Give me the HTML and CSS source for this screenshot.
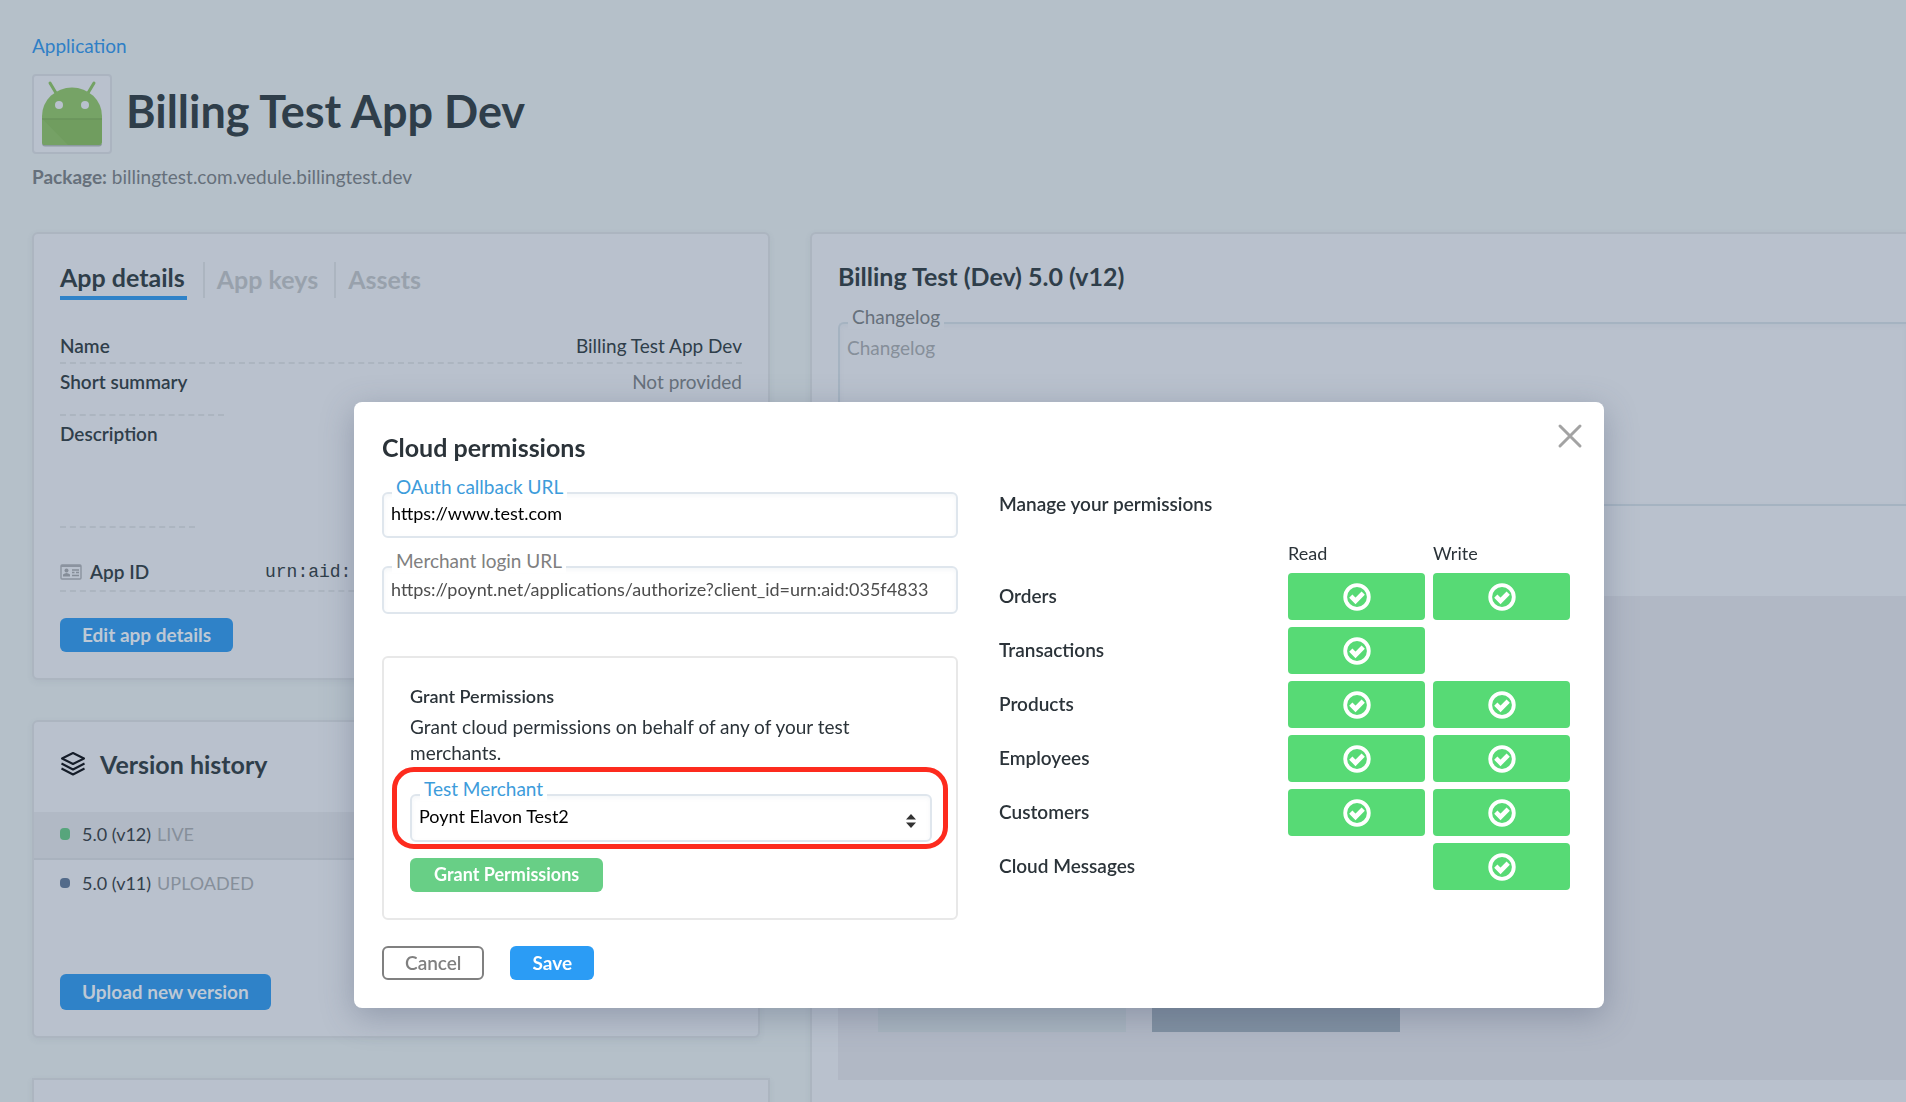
FILE: index.html
```html
<!DOCTYPE html>
<html lang="en">
<head>
<meta charset="utf-8">
<title>Billing Test App Dev</title>
<link rel="stylesheet" href="styles.css">
</head>
<body>
<svg class="sprite" aria-hidden="true">
  <symbol id="check" viewBox="0 0 28 28">
    <circle cx="14" cy="14" r="11.8" fill="none" stroke="#fff" stroke-width="3.8"/>
    <path d="M7.800 13.200 12.500 17.900 20.200 10.200" fill="none" stroke="#fff" stroke-width="4.6"/>
  </symbol>
</svg>

<div class="page">
  <header class="page-head">
    <a class="crumb" href="#">Application</a>
    <div class="title-row">
      <div class="app-icon">
        <svg width="64" height="70" viewBox="0 0 64 70" aria-hidden="true">
          <path d="M10 4 16 14M54 4 48 14" stroke="#73a263" stroke-width="3" stroke-linecap="round"/>
          <path d="M2 40V37a30 28.500 0 0 1 60 0v3z" fill="#76a366"/>
          <path d="M2 65a3 3 0 0 0 3 2.500H59a3 3 0 0 0 3-2.500z" fill="#8c9aa0"/>
          <path d="M2 39.500H62V63a3 3 0 0 1-3 3H5a3 3 0 0 1-3-3z" fill="#709d5f"/>
          <path d="M2 39.500 28 66H5a3 3 0 0 1-3-3z" fill="#75a165"/>
          <path d="M2 40H62" stroke="#668f5a" stroke-width="1"/>
          <circle cx="19" cy="26" r="4" fill="#b9c1cd"/>
          <circle cx="45" cy="26" r="4" fill="#b9c1cd"/>
        </svg>
      </div>
      <h1>Billing Test App Dev</h1>
    </div>
    <p class="package"><strong>Package:</strong> billingtest.com.vedule.billingtest.dev</p>
  </header>

  <main class="columns">
    <div class="left">
      <section class="card details">
        <nav class="tabs">
          <a class="tab active" href="#">App details</a>
          <a class="tab" href="#">App keys</a>
          <a class="tab" href="#">Assets</a>
        </nav>
        <dl class="facts">
          <div class="fact ruled"><dt>Name</dt><dd>Billing Test App Dev</dd></div>
          <div class="fact summary"><dt>Short summary</dt><dd class="empty">Not provided</dd></div>
          <div class="fact description"><dt>Description</dt></div>
          <div class="fact ruled app-id">
            <dt>
              <svg width="22" height="16" viewBox="0 0 22 16" aria-hidden="true">
                <rect x="1" y="1" width="20" height="14" rx="1" fill="none" stroke="#8b939f" stroke-width="1.400"/>
                <path d="M1 2H21" stroke="#8b939f" stroke-width="2"/>
                <circle cx="6.500" cy="6.500" r="2" fill="#858d98"/>
                <path d="M3 12.500V10.500Q6.500 7.500 10 10.500V12.500z" fill="#858d98"/>
                <path d="M12 6H19M12 8.500H14.500M16 8.500H19M12 11.500H19" stroke="#858d98" stroke-width="1.300"/>
              </svg>
              App ID
            </dt>
            <dd class="mono">urn:aid:</dd>
          </div>
        </dl>
        <button class="btn dim" type="button">Edit app details</button>
      </section>

      <section class="card history">
        <h2>
          <svg width="26" height="26" viewBox="0 0 26 26" fill="none" stroke="#151d29" stroke-width="2" stroke-linejoin="round" aria-hidden="true">
            <path d="M13 2 24 7.500 13 13 2 7.500z"/>
            <path d="M1.500 12.500 13 18.500 24.500 12.500M1.500 17.500 13 23.500 24.500 17.500"/>
          </svg>
          Version history
        </h2>
        <ul class="versions">
          <li class="live"><i class="dot"></i>5.0 (v12) <span>LIVE</span></li>
          <li><i class="dot"></i>5.0 (v11) <span>UPLOADED</span></li>
        </ul>
        <button class="btn dim tall" type="button">Upload new version</button>
      </section>

      <section class="card next"></section>
    </div>

    <section class="card release">
      <h2>Billing Test (Dev) 5.0 (v12)</h2>
      <div class="field on-page">
        <label for="changelog">Changelog</label>
        <textarea id="changelog" placeholder="Changelog"></textarea>
      </div>
      <div class="shots">
        <div class="shot"></div>
        <div class="shot dark"></div>
      </div>
    </section>
  </main>
</div>

<div class="overlay">
  <div class="modal" role="dialog" aria-labelledby="modal-title">
    <button class="close" type="button" aria-label="Close">
      <svg width="26" height="26" viewBox="0 0 26 26" stroke="#a3a3a3" stroke-width="3" stroke-linecap="round" aria-hidden="true"><path d="M3 3 23 23M23 3 3 23"/></svg>
    </button>
    <form class="urls">
      <h2 id="modal-title">Cloud permissions</h2>
      <div class="field focus">
        <label for="oauth">OAuth callback URL</label>
        <input id="oauth" type="text" value="https://www.test.com">
      </div>
      <div class="field">
        <label for="login">Merchant login URL</label>
        <input id="login" type="text" readonly value="https://poynt.net/applications/authorize?client_id=urn:aid:035f4833">
      </div>
      <div class="grant">
        <h3>Grant Permissions</h3>
        <p>Grant cloud permissions on behalf of any of your test merchants.</p>
        <div class="highlight">
          <div class="field focus">
            <label for="merchant">Test Merchant</label>
            <select id="merchant"><option>Poynt Elavon Test2</option></select>
            <svg class="arrows" width="10" height="14" viewBox="0 0 10 14" fill="#333" aria-hidden="true"><path d="M0 5.500 5 0 10 5.500zM0 8.500 5 14 10 8.500z"/></svg>
          </div>
        </div>
        <button class="btn green" type="button">Grant Permissions</button>
      </div>
      <div class="actions">
        <button class="btn outline" type="button">Cancel</button>
        <button class="btn primary" type="button">Save</button>
      </div>
    </form>

    <section class="permissions">
      <h3>Manage your permissions</h3>
      <table>
        <thead><tr><td></td><th scope="col">Read</th><th scope="col">Write</th></tr></thead>
        <tbody>
          <tr><th scope="row">Orders</th>
            <td><label class="perm"><input type="checkbox" checked aria-label="Read orders"><svg><use href="#check"/></svg></label></td>
            <td><label class="perm"><input type="checkbox" checked aria-label="Write orders"><svg><use href="#check"/></svg></label></td></tr>
          <tr><th scope="row">Transactions</th>
            <td><label class="perm"><input type="checkbox" checked aria-label="Read transactions"><svg><use href="#check"/></svg></label></td>
            <td></td></tr>
          <tr><th scope="row">Products</th>
            <td><label class="perm"><input type="checkbox" checked aria-label="Read products"><svg><use href="#check"/></svg></label></td>
            <td><label class="perm"><input type="checkbox" checked aria-label="Write products"><svg><use href="#check"/></svg></label></td></tr>
          <tr><th scope="row">Employees</th>
            <td><label class="perm"><input type="checkbox" checked aria-label="Read employees"><svg><use href="#check"/></svg></label></td>
            <td><label class="perm"><input type="checkbox" checked aria-label="Write employees"><svg><use href="#check"/></svg></label></td></tr>
          <tr><th scope="row">Customers</th>
            <td><label class="perm"><input type="checkbox" checked aria-label="Read customers"><svg><use href="#check"/></svg></label></td>
            <td><label class="perm"><input type="checkbox" checked aria-label="Write customers"><svg><use href="#check"/></svg></label></td></tr>
          <tr><th scope="row">Cloud Messages</th>
            <td></td>
            <td><label class="perm"><input type="checkbox" checked aria-label="Write cloud messages"><svg><use href="#check"/></svg></label></td></tr>
        </tbody>
      </table>
    </section>
  </div>
</div>
</body>
</html>
```

FILE: styles.css
```css
* { box-sizing: border-box; }
html { height: 100%; }
body {
  margin: 0;
  height: 100%;
  overflow: hidden;
  background: #b5c0c9;
  color: #2f3e4a;
  font: 19px/24px Lato, "Liberation Sans", sans-serif;
}
h1, h2, h3, p, dl, dd, ul { margin: 0; padding: 0; }
h2 { font-size: 25px; line-height: 32px; font-weight: 700; }
h3 { font-size: 19px; line-height: 24px; font-weight: 600; }
button, input, select, textarea { font: inherit; color: inherit; }
a { text-decoration: none; }
.sprite { display: none; }

/* Page behind the dialog */
.page-head { padding: 34px 32px 0; }
.crumb { display: block; color: #2f7fc6; }
.title-row { display: flex; align-items: center; gap: 14px; margin-top: 16px; }
.app-icon {
  display: flex;
  justify-content: center;
  width: 80px;
  height: 80px;
  padding-top: 3px;
  border: 2px solid #abb4c0;
  border-radius: 4px;
  background: #b9c1cd;
}
h1 { font-size: 45px; line-height: 56px; padding-bottom: 6px; font-weight: 700; }
.package { margin-top: 11px; color: #66707b; }

.columns {
  display: grid;
  grid-template-columns: 738px 1fr;
  gap: 40px;
  padding: 43px 0 0 32px;
}
.left { display: flex; flex-direction: column; gap: 40px; }
.card {
  border: 2px solid #acb5c0;
  border-radius: 6px;
  background: #b9c1cd;
  box-shadow: 0 2px 6px rgba(80, 95, 115, .08);
}
.details { height: 448px; padding: 26px 26px 0; }
.tabs { display: flex; align-items: center; height: 40px; }
.tab {
  display: flex;
  align-items: center;
  height: 36px;
  padding: 0 16px 2px 12px;
  border-left: 2px solid #acb5c0;
  color: #98a1ac;
  font-size: 25px;
  font-weight: 700;
}
.tab.active {
  height: 40px;
  margin-right: 16px;
  padding: 0 2px 2px 0;
  border: 0;
  border-bottom: 4px solid #2f82c8;
  color: #2f3e4a;
}
.facts { margin-top: 32px; }
.fact { display: flex; justify-content: space-between; padding-top: 2px; }
.fact dt { font-weight: 600; }
.ruled { height: 32px; border-bottom: 2px dashed #acb5c0; }
.empty { color: #66707b; }
.summary dt { width: 164px; height: 50px; }
.description dt { width: 135px; height: 110px; }
.summary dt, .description dt { padding-top: 4px; border-bottom: 2px dashed #acb5c0; }
.summary dd { padding-top: 4px; }
.app-id { align-items: flex-start; justify-content: flex-start; margin-top: 32px; padding-top: 0; }
.app-id dt { display: flex; align-items: center; gap: 8px; width: 205px; }
.mono { font-family: "Liberation Mono", monospace; font-size: 18px; }

.btn {
  height: 34px;
  padding: 0 22px;
  border: 0;
  border-radius: 6px;
  font-weight: 700;
}
.dim { background: #2f82c8; color: #bdc8d5; }
.details .btn { margin-top: 26px; }

.history { width: 728px; height: 318px; }
.history h2 { display: flex; align-items: center; gap: 14px; padding: 26px 26px 0; }
.versions { margin-top: 32px; list-style: none; font-size: 18px; }
.versions li {
  display: flex;
  align-items: center;
  gap: 6px;
  height: 48px;
  padding: 0 26px 2px;
  color: #333f4b;
}
.versions .live { border-bottom: 2px solid #a9b2be; background: #b1b9c5; }
.versions span { color: #868f9a; }
.dot { width: 10px; height: 10px; margin-right: 6px; border-radius: 4px; background: #536b8a; }
.live .dot { height: 12px; background: #57a57c; }
.tall { height: 36px; margin: 66px 26px 0; }
.next { height: 60px; border-radius: 0; }

.release { padding: 26px 0 0 26px; border-right: 0; border-radius: 6px 0 0 6px; height: 900px; }
.release h2 { padding-bottom: 2px; }
.release .field { margin-top: 28px; }
.shots {
  display: flex;
  gap: 26px;
  height: 484px;
  margin-top: 90px;
  padding: 0 40px 48px;
  background: #b1b8c5;
}
.shot { width: 248px; background: #a8b4bf; }
.shot.dark { background: #8090a1; }

/* Boxes with the label set into the border */
.field { position: relative; display: grid; }
.field label {
  position: absolute;
  top: -17px;
  left: 10px;
  padding: 0 4px;
  background: #fff;
  color: #808080;
}
.field.focus label { color: #3d9cdb; }
.field input, .field select, .field textarea {
  width: 100%;
  height: 48px;
  padding: 0 7px 2px;
  border: 2px solid #dfe6ed;
  border-radius: 6px;
  background: #fff;
  color: #4d4d4d;
  font-size: 18px;
  box-shadow: inset 0 2px 4px rgba(120, 140, 160, .08);
  outline: 0;
}
.field.focus input, .field.focus select { padding-bottom: 4px; color: #000; }
.field.focus input { height: 46px; }
.field select { appearance: none; }
.on-page label { background: #b9c1cd; color: #66707b; }
.field.on-page textarea {
  height: 184px;
  padding-top: 12px;
  border-color: #a5b3c1;
  border-right: 0;
  border-radius: 6px 0 0 6px;
  background: transparent;
  font-size: 19px;
  resize: none;
}
.on-page textarea::placeholder { color: #868f9a; }

/* Dialog */
.overlay { position: fixed; inset: 0; padding: 402px 302px 0 354px; }
.modal {
  position: relative;
  display: grid;
  grid-template-columns: 576px 1fr;
  gap: 41px;
  padding: 28px 34px 28px 28px;
  border-radius: 8px;
  background: #fff;
  color: #2b3339;
  box-shadow: 0 8px 32px rgba(70, 80, 110, .35);
}
.close {
  position: absolute;
  top: 21px;
  right: 21px;
  display: flex;
  padding: 0;
  border: 0;
  background: none;
}
.urls h2 { margin-bottom: 28px; line-height: 34px; }
.urls > .field + .field { margin-top: 28px; }
.grant {
  margin-top: 42px;
  padding: 26px;
  height: 264px;
  border: 2px solid #e8e8e8;
  border-radius: 6px;
}
.grant h3 { font-size: 18px; }
.grant p { margin-top: 6px; padding-right: 60px; line-height: 26px; }
.highlight {
  margin: 1px -18px 9px;
  padding: 22px 11px 2px 13px;
  border: 5px solid #fd2b1e;
  border-radius: 22px;
}
.arrows { position: absolute; top: 20px; right: 16px; }
.green { padding: 0 24px 2px; background: #68cf86; color: #fff; font-size: 18px; }
.actions { display: flex; gap: 26px; margin-top: 26px; }
.outline { padding: 0 21px; border: 2px solid #808080; background: #fff; color: #808080; font-weight: 600; }
.primary { background: #2b9cf5; color: #fff; }

.permissions { padding-top: 62px; }
.permissions table {
  width: 100%;
  margin-top: 25px;
  border-collapse: collapse;
  table-layout: fixed;
}
.permissions th, .permissions td { padding: 0; text-align: left; font-weight: 600; }
.permissions thead th { width: 145px; padding-bottom: 8px; font-weight: 400; font-size: 18px; }
.permissions thead th:last-child { width: 137px; }
.permissions tbody tr { height: 54px; }
.permissions tbody th { padding-bottom: 8px; }
.perm { display: grid; place-items: center; margin: 0 8px 7px 0; }
.permissions td:last-child .perm { margin-right: 0; }
.perm input, .perm svg { grid-area: 1 / 1; }
.perm input {
  width: 100%;
  height: 47px;
  margin: 0;
  border-radius: 4px;
  background: #57da75;
  appearance: none;
}
.perm svg { width: 28px; height: 28px; pointer-events: none; }
```
